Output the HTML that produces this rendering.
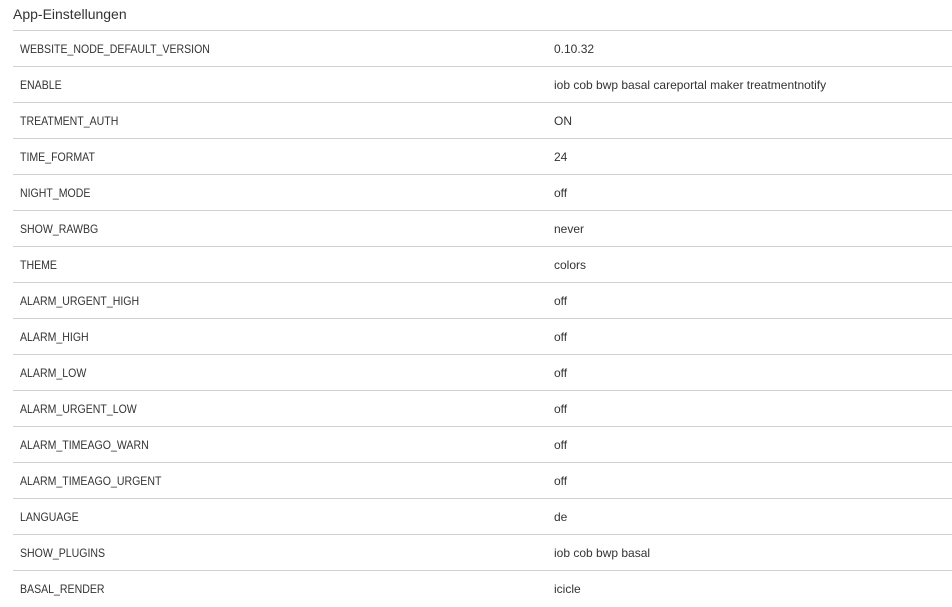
<!DOCTYPE html>
<html><head><meta charset="utf-8"><style>
body{margin:0;background:#fff;font-family:"Liberation Sans",sans-serif;color:#333;width:952px;height:606px;overflow:hidden}
.t{position:absolute;left:13px;top:6px;font-size:14px;color:#333}
.row{position:absolute;left:13px;width:939px;height:36px;border-top:1px solid #d0d0d0;font-size:12px}
.row span{position:absolute;top:11px}
.k{left:7px;transform:scaleX(0.88);transform-origin:0 0;white-space:nowrap}.v{left:541px}
</style></head><body>
<div class="t">App-Einstellungen</div>
<div class="row" style="top:30px"><span class="k">WEBSITE_NODE_DEFAULT_VERSION</span><span class="v">0.10.32</span></div>
<div class="row" style="top:66px"><span class="k">ENABLE</span><span class="v">iob cob bwp basal careportal maker treatmentnotify</span></div>
<div class="row" style="top:102px"><span class="k">TREATMENT_AUTH</span><span class="v">ON</span></div>
<div class="row" style="top:138px"><span class="k">TIME_FORMAT</span><span class="v">24</span></div>
<div class="row" style="top:174px"><span class="k">NIGHT_MODE</span><span class="v">off</span></div>
<div class="row" style="top:210px"><span class="k">SHOW_RAWBG</span><span class="v">never</span></div>
<div class="row" style="top:246px"><span class="k">THEME</span><span class="v">colors</span></div>
<div class="row" style="top:282px"><span class="k">ALARM_URGENT_HIGH</span><span class="v">off</span></div>
<div class="row" style="top:318px"><span class="k">ALARM_HIGH</span><span class="v">off</span></div>
<div class="row" style="top:354px"><span class="k">ALARM_LOW</span><span class="v">off</span></div>
<div class="row" style="top:390px"><span class="k">ALARM_URGENT_LOW</span><span class="v">off</span></div>
<div class="row" style="top:426px"><span class="k">ALARM_TIMEAGO_WARN</span><span class="v">off</span></div>
<div class="row" style="top:462px"><span class="k">ALARM_TIMEAGO_URGENT</span><span class="v">off</span></div>
<div class="row" style="top:498px"><span class="k">LANGUAGE</span><span class="v">de</span></div>
<div class="row" style="top:534px"><span class="k">SHOW_PLUGINS</span><span class="v">iob cob bwp basal</span></div>
<div class="row" style="top:570px"><span class="k">BASAL_RENDER</span><span class="v">icicle</span></div>
</body></html>
